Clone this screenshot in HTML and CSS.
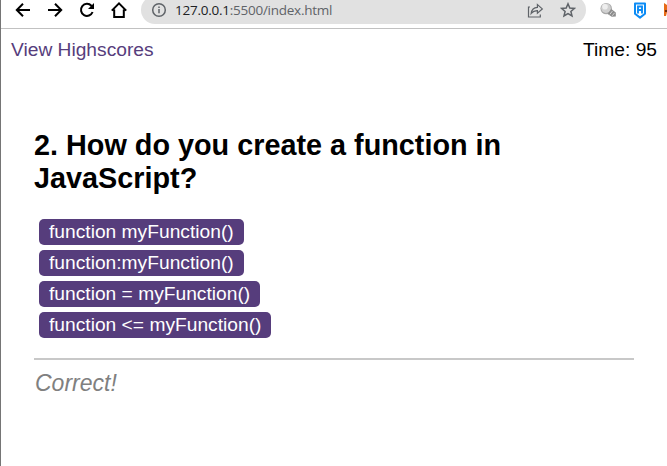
FILE: index.html
```html
<!DOCTYPE html>
<html lang="en">
<head>
<meta charset="utf-8">
<title>Code Quiz</title>
<link rel="stylesheet" href="styles.css">
</head>
<body>
<div class="window">
  <div class="toolbar">
    <nav class="nav">
      <svg class="icon" viewBox="0 0 20 20"><path d="M17 10H4M10 3.8L3.8 10l6.2 6.2"/></svg>
      <svg class="icon" viewBox="0 0 20 20"><path d="M3 10h13M10 3.8l6.2 6.2-6.2 6.2"/></svg>
      <svg class="icon" viewBox="0 0 20 20"><path d="M15.6 12A6 6 0 1 1 14.4 5.8L16 7.4"/><path class="solid" d="M17 3v6h-6z"/></svg>
      <svg class="icon" viewBox="0 0 20 20"><path d="M2.8 10.6L10 3.4l7.2 7.2M5.2 9.5V17h9.6V9.5"/></svg>
    </nav>
    <div class="address">
      <svg class="info" viewBox="0 0 16 16"><circle cx="8" cy="8" r="6.3"/><path d="M8 7v4.3M8 4.5v1.4"/></svg>
      <span class="url"><span class="host">127.0.0.1</span>:5500/index.html</span>
      <svg class="share" viewBox="0 0 18 16"><path d="M3 5H1.5v10h11.8v-2.6"/><path d="M4.2 11.4c.5-4 2.7-6 6.2-6.1V2.6l4.9 4.3-4.9 4.2V8.6c-2.6-.1-4.4.6-6.2 2.8z"/></svg>
      <svg class="star" viewBox="0 0 16 16"><path d="M8 1.8l1.8 4.2 4.6.4-3.5 3 1.1 4.5L8 11.5l-4 2.4 1.1-4.5-3.5-3 4.6-.4z"/></svg>
    </div>
    <div class="extensions">
      <svg class="bulb" viewBox="0 0 17 16"><circle cx="6.2" cy="6.6" r="5.7" fill="#a8a8a8"/><circle cx="6" cy="6.2" r="4.8" fill="#d0d0d0"/><circle cx="5" cy="4.8" r="2.8" fill="#eee"/><path d="M7.6 12l3.7-5 4.5 3.4v4.2l-4 .2z" fill="#8c8c8c"/><path d="M9.8 12.4l2.6-3.3M12.2 13.8l2.4-3" stroke="#d4d4d4"/></svg>
      <svg class="shield" viewBox="0 0 14 17"><path d="M2 1.5h10v10.3l-5 3.8-5-3.8z" fill="#fff" stroke="#0d8cf5" stroke-width="2" stroke-linejoin="round"/><path d="M5 11.4V4.5h4v6.9M5 8h4" fill="none" stroke="#0d8cf5" stroke-width="1.9"/></svg>
      <svg class="fox" viewBox="0 0 3 16"><path d="M0 1l3 2v7l-1 4H0z" fill="#e66a16"/><path d="M1 8h2v2H1z" fill="#6b2c0c"/></svg>
    </div>
  </div>
  <header class="header">
    <a class="scores">View Highscores</a>
    <div class="timer">Time: 95</div>
  </header>
  <main class="quiz">
    <h1 class="question">2. How do you create a function in JavaScript?</h1>
    <div class="choices">
      <button class="choice">function myFunction()</button>
      <button class="choice">function:myFunction()</button>
      <button class="choice">function = myFunction()</button>
      <button class="choice">function &lt;= myFunction()</button>
    </div>
    <div class="feedback">Correct!</div>
  </main>
</div>
</body>
</html>
```
FILE: styles.css
```css
* { box-sizing: border-box; }
body {
  margin: 0;
  background: #fff;
  color: #000;
  font: 19.2px/22px "Liberation Sans", Arial, sans-serif;
}
svg { display: block; flex: none; }
.window {
  height: 466px;
  overflow: hidden;
  border-left: 1px solid #757575;
}
.toolbar {
  display: flex;
  height: 29px;
  overflow: hidden;
  border-bottom: 1px solid #c1c1c1;
}
.nav {
  display: flex;
  gap: 12px;
  width: 140px;
  padding-left: 12px;
  flex: none;
}
.icon {
  width: 20px;
  height: 20px;
  fill: none;
  stroke: #000;
  stroke-width: 2;
}
.icon .solid { fill: #000; stroke: none; }
.address {
  display: flex;
  align-items: center;
  width: 445px;
  height: 28px;
  margin-top: -4px;
  padding: 0 10px;
  border-radius: 14px;
  background: #e1e1e1;
  flex: none;
}
.info, .star, .share {
  width: 16px;
  height: 16px;
  fill: none;
  stroke: #5f6368;
  stroke-width: 1.5;
}
.share { width: 18px; margin-left: auto; stroke-width: 1.2; }
.star { margin-left: 15px; }
.url {
  margin-left: 8px;
  color: #5f6368;
  font: 13.5px/20px "Open Sans", sans-serif;
  letter-spacing: -0.25px;
}
.host { color: #202124; }
.extensions {
  display: flex;
  flex: 1;
  padding: 2px 0 0 14px;
}
.bulb { width: 17px; height: 16px; }
.shield { width: 14px; height: 17px; margin-left: 16px; }
.fox { width: 3px; height: 16px; margin-left: 17px; }
.header {
  display: flex;
  justify-content: space-between;
  padding: 10px 10px 0;
}
.scores { color: #563d7c; }
.quiz {
  width: 600px;
  margin: 68px 0 0 33px;
}
.question {
  margin: 0 0 24px;
  font-size: 28.8px;
  line-height: 33px;
}
.choices {
  display: flex;
  flex-direction: column;
  align-items: flex-start;
  gap: 5px;
  padding-left: 5px;
}
.choice {
  height: 26px;
  padding: 0 10px;
  border: 0;
  border-radius: 5px;
  background: #563d7c;
  color: #fff;
  font: inherit;
  letter-spacing: 0.01px;
}
.feedback {
  margin-top: 20px;
  padding: 10px 0 0 1px;
  border-top: 2px solid #c8c8c8;
  color: gray;
  font-size: 23px;
  font-style: italic;
  line-height: 27px;
}
```
